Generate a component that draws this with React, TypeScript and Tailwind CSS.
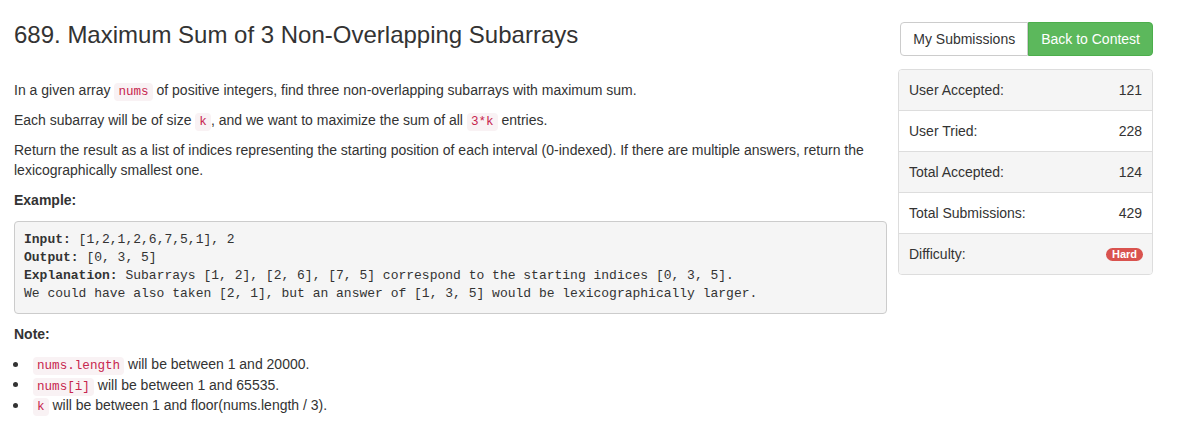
import React from "react";

const C = ({ children }: { children: React.ReactNode }) => (
  <code className="rounded-[4px] bg-[#f9f2f4] px-[4px] py-[2px] text-[12.6px] leading-none text-[#c7254e] [font-family:'Liberation_Mono',monospace]">
    {children}
  </code>
);

const rows: { label: string; value: React.ReactNode; gray: boolean }[] = [
  { label: "User Accepted:", value: "121", gray: true },
  { label: "User Tried:", value: "228", gray: false },
  { label: "Total Accepted:", value: "124", gray: true },
  { label: "Total Submissions:", value: "429", gray: false },
  {
    label: "Difficulty:",
    value: (
      <span className="-mr-[1px] inline-block rounded-[7px] bg-[#d9534f] px-[6px] pb-[1px] pt-[1px] align-middle text-[11px] font-bold leading-[11px] text-white">
        Hard
      </span>
    ),
    gray: true,
  },
];

const Li = ({ children }: { children: React.ReactNode }) => (
  <li className="flex leading-[20.5px]">
    <span className="flex h-[20.5px] w-[19px] shrink-0 items-center">
      <span className="-ml-[1px] block h-[5px] w-[5px] rounded-full bg-[#333]" />
    </span>
    <span>{children}</span>
  </li>
);

export default function App() {
  return (
    <div className="flex min-h-[432px] bg-white pl-[14px] text-[14px] leading-[20px] text-[#333] [font-family:'Liberation_Sans',Arial,sans-serif]">
      <div className="w-[873px] shrink-0">
        <h3 className="mb-[32px] mt-[22px] text-[24px] font-medium leading-[26px]">
          689. Maximum Sum of 3 Non-Overlapping Subarrays
        </h3>
        <p className="mb-[10px]">
          In a given array <C>nums</C> of positive integers, find three non-overlapping subarrays with maximum sum.
        </p>
        <p className="mb-[10px]">
          Each subarray will be of size <C>k</C>, and we want to maximize the sum of all <C>3*k</C> entries.
        </p>
        <p className="mb-[10px]">
          Return the result as a list of indices representing the starting position of each interval (0-indexed). If there are multiple answers, return the lexicographically smallest one.
        </p>
        <p className="mb-[11px] font-bold">Example:</p>
        <pre className="mb-[10px] rounded-[4px] border border-[#ccc] bg-[#f5f5f5] px-[9px] pb-[10px] pt-[9px] text-[13px] leading-[18px] text-[#333] [font-family:'Liberation_Mono',monospace]">
          <b>Input:</b> [1,2,1,2,6,7,5,1], 2{"\n"}
          <b>Output:</b> [0, 3, 5]{"\n"}
          <b>Explanation:</b> Subarrays [1, 2], [2, 6], [7, 5] correspond to the starting indices [0, 3, 5].{"\n"}
          We could have also taken [2, 1], but an answer of [1, 3, 5] would be lexicographically larger.
        </pre>
        <p className="mb-[10px] font-bold">Note:</p>
        <ul>
          <Li>
            <C>nums.length</C> will be between 1 and 20000.
          </Li>
          <Li>
            <C>nums[i]</C> will be between 1 and 65535.
          </Li>
          <Li>
            <C>k</C> will be between 1 and floor(nums.length / 3).
          </Li>
        </ul>
      </div>
      <div className="ml-[11px] w-[255px] shrink-0">
        <div className="mt-[22px] flex justify-end">
          <button className="rounded-l-[4px] border border-[#ccc] bg-white px-[12px] py-[6px] text-[14px] leading-[20px] text-[#333]">
            My Submissions
          </button>
          <button className="rounded-r-[4px] border border-[#4cae4c] bg-[#5cb85c] px-[12px] py-[6px] text-[14px] leading-[20px] text-white">
            Back to Contest
          </button>
        </div>
        <div className="mt-[13px] overflow-hidden rounded-[4px] border border-[#ddd]">
          {rows.map((r, i) => (
            <div
              key={r.label}
              className={`flex items-center justify-between px-[10px] ${i > 0 ? "h-[41px] border-t border-[#ddd]" : "h-[40px]"} ${r.gray ? "bg-[#f5f5f5]" : "bg-white"}`}
            >
              <span>{r.label}</span>
              <span className="flex items-center">{r.value}</span>
            </div>
          ))}
        </div>
      </div>
    </div>
  );
}
